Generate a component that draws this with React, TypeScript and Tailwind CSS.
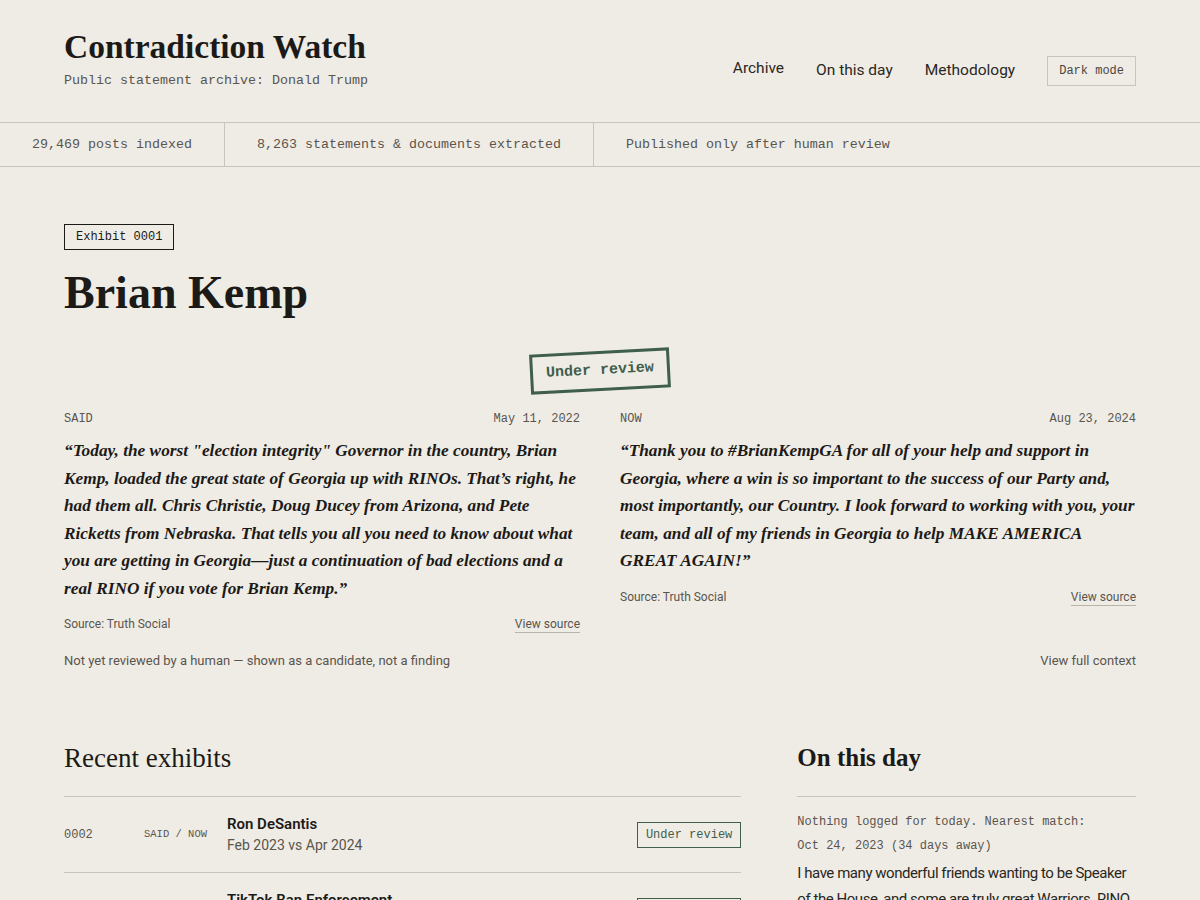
const serif = "font-['Liberation_Serif',serif]";
const mono = "font-['Liberation_Mono',monospace]";
const sans = "font-['Roboto','Liberation_Sans',sans-serif]";

const stats = [
  { text: "29,469 posts indexed", border: true },
  { text: "8,263 statements & documents extracted", border: true },
  { text: "Published only after human review", border: false },
];

function Quote({
  label,
  date,
  text,
}: {
  label: string;
  date: string;
  text: string;
}) {
  return (
    <div className="flex flex-col">
      <div className={`flex justify-between text-[12px] leading-4 text-[#5a554d] ${mono}`}>
        <span>{label}</span>
        <span>{date}</span>
      </div>
      <p className={`mt-[10px] text-[17.3px] leading-[27.5px] font-bold italic text-[#1c1a17] ${serif}`}>
        {text}
      </p>
      <div className={`mt-[14px] flex justify-between text-[12px] leading-4 text-[#5a554d] ${sans}`}>
        <span>Source: Truth Social</span>
        <a className="border-b border-[#b9b4aa]">View source</a>
      </div>
    </div>
  );
}

const exhibits = [
  { id: "0002", title: "Ron DeSantis", sub: "Feb 2023 vs Apr 2024" },
  { id: "0003", title: "TikTok Ban Enforcement", sub: "Mar 2024 vs Jun 2024" },
];

export default function App() {
  return (
    <div className={`min-h-screen bg-[#efece6] text-[#1c1a17] ${sans}`}>
      <header className="flex items-start justify-between px-16 pt-[28px] pb-[33px]">
        <div>
          <h1 className={`text-[33.5px] leading-[38px] font-bold ${serif}`}>Contradiction Watch</h1>
          <p className={`mt-[7px] text-[13.33px] leading-4 text-[#5a554d] ${mono}`}>
            Public statement archive: Donald Trump
          </p>
        </div>
        <nav className="mt-[28px] flex items-center gap-8 text-[15.5px] text-[#2a2722]">
          <a className="-mt-[4px]">Archive</a>
          <a>On this day</a>
          <a>Methodology</a>
          <button className={`border border-[#c9c5bd] px-[11px] py-[6px] text-[12px] leading-4 text-[#4a463f] ${mono}`}>
            Dark mode
          </button>
        </nav>
      </header>

      <div className="flex border-y border-[#c9c5bd]">
        {stats.map((s) => (
          <div
            key={s.text}
            className={`px-8 py-[13px] text-[13.33px] leading-[17px] text-[#5a554d] ${mono} ${
              s.border ? "border-r border-[#c9c5bd]" : ""
            }`}
          >
            {s.text}
          </div>
        ))}
      </div>

      <main className="px-16 pt-[56px]">
        <span className={`inline-block border border-[#1c1a17] px-[11px] py-[4px] text-[12px] leading-4 ${mono}`}>
          Exhibit 0001
        </span>
        <h2 className={`mt-[16px] text-[46px] leading-[54px] font-bold ${serif}`}>Brian Kemp</h2>

        <div className="mt-[31px] flex justify-center">
          <div
            className={`-rotate-3 border-[3px] border-[#3f5e4c] px-[13px] py-[7px] text-[15px] leading-5 font-bold text-[#3f5e4c] ${mono}`}
          >
            Under review
          </div>
        </div>

        <div className="mt-[20px] grid grid-cols-2 gap-10">
          <Quote
            label="SAID"
            date="May 11, 2022"
            text={'\u201CToday, the worst "election integrity" Governor in the country, Brian Kemp, loaded the great state of Georgia up with RINOs. That\u2019s right, he had them all. Chris Christie, Doug Ducey from Arizona, and Pete Ricketts from Nebraska. That tells you all you need to know about what you are getting in Georgia\u2014just a continuation of bad elections and a real RINO if you vote for Brian Kemp.\u201D'}
          />
          <Quote
            label="NOW"
            date="Aug 23, 2024"
            text={"\u201CThank you to #BrianKempGA for all of your help and support in Georgia, where a win is so important to the success of our Party and, most importantly, our Country. I look forward to working with you, your team, and all of my friends in Georgia to help MAKE AMERICA GREAT AGAIN!\u201D"}
          />
        </div>

        <div className="mt-[18px] flex justify-between text-[13px] leading-5 text-[#5a554d]">
          <span>Not yet reviewed by a human — shown as a candidate, not a finding</span>
          <a>View full context</a>
        </div>

        <div className="mt-[69px] grid grid-cols-[2fr_1fr] gap-14">
          <section>
            <h3 className={`text-[27px] leading-[36px] ${serif}`}>Recent exhibits</h3>
            <ul className="mt-[20px] border-t border-[#c9c5bd]">
              {exhibits.map((e) => (
                <li key={e.id} className="flex items-center border-b border-[#c9c5bd] py-[17px]">
                  <span className={`w-[80px] text-[12px] text-[#5a554d] ${mono}`}>{e.id}</span>
                  <span className={`w-[83px] text-[10.5px] text-[#5a554d] ${mono}`}>SAID / NOW</span>
                  <div className="flex-1">
                    <div className="text-[15px] leading-5 font-semibold">{e.title}</div>
                    <div className="mt-[1px] text-[14px] leading-5 text-[#5a554d]">{e.sub}</div>
                  </div>
                  <span className={`border border-[#3f5e4c] px-2 py-[4px] text-[12px] leading-4 text-[#3f5e4c] ${mono}`}>
                    Under review
                  </span>
                </li>
              ))}
            </ul>
          </section>
          <section>
            <h3 className={`text-[25px] leading-[36px] font-bold ${serif}`}>On this day</h3>
            <div className="mt-[20px] border-t border-[#c9c5bd] pt-[13px]">
              <p className={`text-[12px] leading-6 text-[#5a554d] ${mono}`}>
                Nothing logged for today. Nearest match:
                <br />
                Oct 24, 2023 (34 days away)
              </p>
              <p className="mt-[2px] text-[15px] leading-[26px] tracking-[-0.45px] text-[#2a2722]">
                I have many wonderful friends wanting to be Speaker of the House, and some are truly great Warriors. RINO
                Tom Emmer, whose endorsement is not worth anything, is not one of them.
              </p>
            </div>
          </section>
        </div>
      </main>
    </div>
  );
}
